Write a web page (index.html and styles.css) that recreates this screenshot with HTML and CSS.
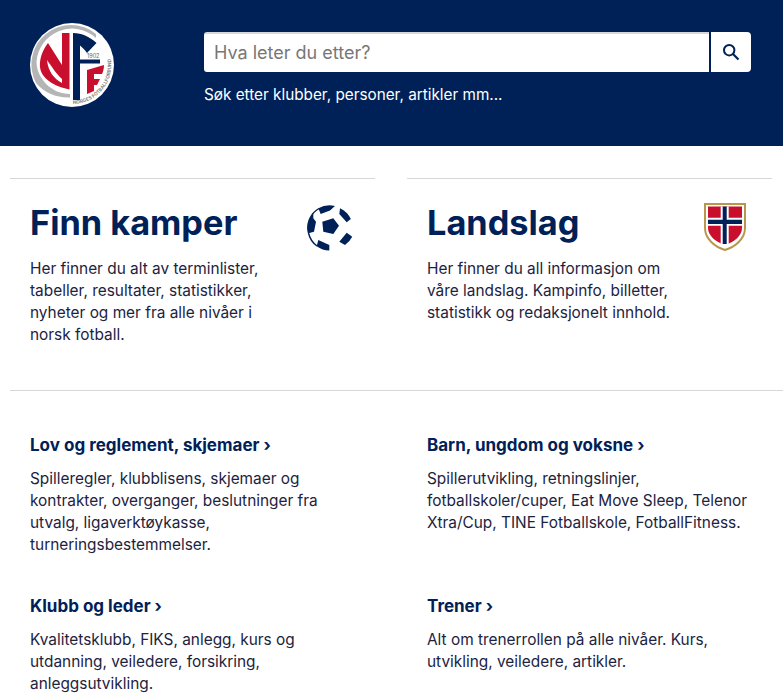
FILE: index.html
```html
<!DOCTYPE html>
<html lang="no">
<head>
  <meta charset="UTF-8">
  <meta name="viewport" content="width=device-width, initial-scale=1.0">
  <title>Norges Fotballforbund</title>
  <link rel="stylesheet" href="styles.css">
</head>
<body>
  <header class="site-header">
    <a class="logo" href="#">
      <svg viewBox="0 0 84 84" width="84" height="84">
        <circle cx="42" cy="42" r="42" fill="#fff"/>
        <!-- grey ring -->
        <path d="M66 11 A39.5 39.5 0 0 0 6 60 C14 70 27 75 40 74.5 V71 C22 71 7 56 6.5 39 A35.5 35.5 0 0 1 66 15 Z" fill="#b5b5b5"/>
        <!-- red N -->
        <path d="M18 20 C12 28 9.5 36 10 44 C11 55 24 63.5 39.5 66.5 V10 H32 V42 L18 20 Z" fill="#c8102e"/>
        <path d="M17 37 C22 44 27 52 32 56 V60 C24 56 18 48 17 37 Z" fill="#fff"/>
        <!-- navy F -->
        <path d="M43 10 C52 10 60 14 66.5 20 L57 30 C55 27 52 24 50 22.5 V36.5 H70 V40.5 H50 V77 H43 Z" fill="#002157"/>
        <!-- red f -->
        <path d="M57 47 L74 42 C74 46 73 49 72 51 H64 V56 H70 L67 62 H64 V68 L57 71 Z" fill="#c8102e"/>
        <text class="logo-year" x="57" y="34.5">1902</text>
        <path id="logoArc" d="M43 81 A39 39 0 0 0 80 32" fill="none"/>
        <text class="logo-name"><textPath href="#logoArc">NORGES FOTBALLFORBUND</textPath></text>
      </svg>
    </a>
    <div class="search">
      <form class="search-box">
        <input class="search-input" type="text" placeholder="Hva leter du etter?">
        <button class="search-button" type="button" aria-label="Søk">
          <svg viewBox="0 0 18 18" width="18" height="18">
            <circle cx="7.2" cy="7.2" r="5.2" fill="none" stroke="#002157" stroke-width="2"/>
            <path d="M11 11 L16.5 16.5" stroke="#002157" stroke-width="2.2"/>
          </svg>
        </button>
      </form>
      <p class="search-hint">Søk etter klubber, personer, artikler mm...</p>
    </div>
  </header>

  <section class="features">
    <article class="feature">
      <div class="feature-head">
        <h1>Finn kamper</h1>
        <svg class="feature-icon ball-icon" viewBox="0 0 46 46" width="46" height="46">
          <path d="M15.3 16.7 L26.3 13.3 L32 20.7 L26.3 29 L16.3 26.7 Z" fill="#002157"/>
          <path d="M11.3 3.3 A22.5 22.5 0 0 1 28 1 L23 5.5 L13.7 9 Z" fill="#002157"/>
          <path d="M33 3.3 A22.5 22.5 0 0 1 43.8 14 L39.7 17.3 L32.3 9 Z" fill="#002157"/>
          <path d="M39.7 27.7 L45.2 31.7 A22.5 22.5 0 0 1 38 40 L32.3 36.7 Z" fill="#002157"/>
          <path d="M11.3 35 L22.3 40 V45.5 A22.5 22.5 0 0 1 9.7 41.2 Z" fill="#002157"/>
          <path d="M6.3 13.3 L9 16.7 L7 26.7 L1.3 28.3 A22.5 22.5 0 0 1 6.3 8 Z" fill="#002157"/>
          <path d="M12 3.5 A22 22 0 0 0 1.5 28 A22 22 0 0 0 10 41" fill="none" stroke="#002157" stroke-width="1.4"/>
        </svg>
      </div>
      <p>Her finner du alt av terminlister, tabeller, resultater, statistikker, nyheter og mer fra alle nivåer i norsk fotball.</p>
    </article>
    <article class="feature">
      <div class="feature-head">
        <h1>Landslag</h1>
        <svg class="feature-icon shield-icon" viewBox="0 0 42 48" width="42" height="48">
          <path d="M1 1 H41 V25 C41 36 31 44 21 47 C11 44 1 36 1 25 Z" fill="#fff" stroke="#b8974a" stroke-width="2"/>
          <path d="M4 3.5 H38 V25 C38 33 30 39 21 42 C12 39 4 33 4 25 Z" fill="#c8102e"/>
          <path d="M16.7 3.5 H24.7 V42 H16.7 Z M4 14.7 H38 V22.7 H4 Z" fill="#fff"/>
          <path d="M18.7 3.5 H22.7 V41 H18.7 Z M4 16.7 H38 V21 H4 Z" fill="#002157"/>
        </svg>
      </div>
      <p>Her finner du all informasjon om våre landslag. Kampinfo, billetter, statistikk og redaksjonelt innhold.</p>
    </article>
  </section>

  <section class="links">
    <article class="link-item">
      <h2>Lov og reglement, skjemaer ›</h2>
      <p>Spilleregler, klubblisens, skjemaer og kontrakter, overganger, beslutninger fra utvalg, ligaverktøykasse, turneringsbestemmelser.</p>
    </article>
    <article class="link-item">
      <h2>Barn, ungdom og voksne ›</h2>
      <p>Spillerutvikling, retningslinjer, fotballskoler/cuper, Eat Move Sleep, Telenor Xtra/Cup, TINE Fotballskole, FotballFitness.</p>
    </article>
    <article class="link-item">
      <h2>Klubb og leder ›</h2>
      <p>Kvalitetsklubb, FIKS, anlegg, kurs og utdanning, veiledere, forsikring, anleggsutvikling.</p>
    </article>
    <article class="link-item">
      <h2>Trener ›</h2>
      <p>Alt om trenerrollen på alle nivåer. Kurs, utvikling, veiledere, artikler.</p>
    </article>
  </section>
</body>
</html>
```

FILE: styles.css
```css
html, body {
  height: 695px;
  overflow: hidden;
}
body {
  margin: 0;
  font-family: 'Inter', 'Liberation Sans', sans-serif;
  background-color: #fff;
  color: #002157;
}
.site-header {
  display: flex;
  background-color: #002157;
  height: 146px;
  padding: 23px 32px 0 30px;
  box-sizing: border-box;
}
.logo {
  display: block;
  width: 84px;
  height: 84px;
  margin-right: 90px;
}
.logo-year {
  font-size: 5.5px;
  fill: #666;
}
.logo-name {
  font-size: 4.8px;
  font-weight: 600;
  fill: #777;
}
.search {
  flex: 1;
  padding-top: 9px;
}
.search-box {
  display: flex;
  height: 40px;
  gap: 2px;
}
.search-input {
  flex: 1;
  min-width: 0;
  padding: 0 10px 2px;
  border: none;
  border-top: 2px solid #d8d8d8;
  border-radius: 3px 0 0 3px;
  font-family: inherit;
  font-size: 18px;
  box-sizing: border-box;
}
.search-input::placeholder {
  color: #777;
}
.search-button {
  display: flex;
  align-items: center;
  justify-content: center;
  width: 40px;
  padding: 0;
  border: none;
  border-radius: 0 4px 4px 0;
  background-color: #fff;
}
.search-hint {
  margin: 14px 0 0;
  color: #fff;
  font-size: 15.3px;
  line-height: 18px;
}
.features {
  display: flex;
  gap: 32px;
  margin: 32px 11px 0 10px;
}
.feature {
  flex: 1;
  border-top: 1px solid #d8d8d8;
  padding: 24px 20px 0;
  height: 187px;
}
.feature-head {
  display: flex;
  justify-content: space-between;
  align-items: flex-start;
  height: 50px;
}
.feature h1 {
  margin: 0;
  font-size: 34.3px;
  line-height: 40px;
  font-weight: 700;
}
.feature-icon {
  flex: none;
}
.ball-icon {
  margin: 2px 2px 0 0;
}
.shield-icon {
  margin: 0 6px 0 0;
}
.feature p {
  margin: 5px 0 0;
  max-width: 245px;
  font-size: 15.4px;
  line-height: 22px;
  color: #1c2340;
}
.links {
  display: grid;
  grid-template-columns: 1fr 1fr;
  gap: 39px 32px;
  margin-left: 10px;
  padding: 43px 11px 0 0;
  border-top: 1px solid #d8d8d8;
}
.link-item {
  padding: 0 20px;
}
.link-item h2 {
  margin: 0;
  font-size: 17px;
  line-height: 22px;
  font-weight: 700;
}
.link-item p {
  margin: 12px 0 0;
  font-size: 15.4px;
  line-height: 22px;
  color: #1c2340;
}
```
